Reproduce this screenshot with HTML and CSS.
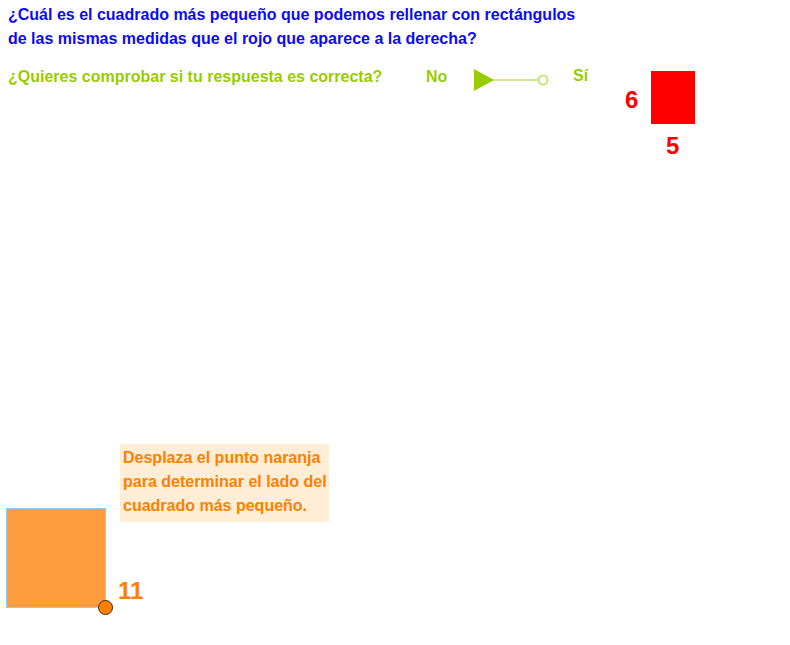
FILE: index.html
```html
<!DOCTYPE html>
<html lang="es">
<head>
<meta charset="utf-8">
<title>Cuadrado más pequeño</title>
<link rel="stylesheet" href="styles.css">
</head>
<body>
<div class="canvas">
  <div class="question">
    <p>¿Cuál es el cuadrado más pequeño que podemos rellenar con rectángulos</p>
    <p>de las mismas medidas que el rojo que aparece a la derecha?</p>
  </div>
  <div class="check-row">
    <span class="check-label">¿Quieres comprobar si tu respuesta es correcta?</span>
    <span class="opt-no">No</span>
    <svg class="slider" width="80" height="24" viewBox="0 0 80 24">
      <line x1="18" y1="11" x2="69" y2="11" stroke="#cdea8c" stroke-width="2"/>
      <polygon points="0,0 20,11 0,22" fill="#99cc00"/>
      <circle cx="69" cy="11" r="4.5" fill="#fff" stroke="#c4e67a" stroke-width="2.2"/>
    </svg>
    <span class="opt-si">Sí</span>
  </div>
  <div class="red-figure">
    <span class="num red-h">6</span>
    <div class="red-rect"></div>
    <span class="num red-w">5</span>
  </div>
  <div class="note">
    <p>Desplaza el punto naranja</p>
    <p>para determinar el lado del</p>
    <p>cuadrado más pequeño.</p>
  </div>
  <div class="orange-square"></div>
  <div class="orange-point"></div>
  <span class="num side-label">11</span>
</div>
</body>
</html>
```
FILE: styles.css
```css
html, body {
  margin: 0;
  padding: 0;
  background: #ffffff;
}
.canvas {
  position: relative;
  width: 790px;
  height: 645px;
  overflow: hidden;
  font-family: "Liberation Sans", Arial, sans-serif;
  font-weight: bold;
}
.canvas p {
  margin: 0;
}
.question {
  position: absolute;
  left: 8px;
  top: 3px;
  color: #0c0cf0;
  font-size: 16px;
  line-height: 24px;
}
.check-row {
  position: absolute;
  left: 8px;
  top: 67px;
  color: #99cc00;
  font-size: 16px;
  line-height: 20px;
}
.check-row > * {
  position: absolute;
  top: 0;
}
.check-label {
  left: 0;
  white-space: nowrap;
}
.opt-no {
  left: 418px;
}
.slider {
  left: 466px;
  top: 2px !important;
}
.opt-si {
  left: 565px;
  top: -1px !important;
}
.red-figure {
  position: absolute;
  left: 624px;
  top: 71px;
  width: 80px;
  height: 95px;
}
.num {
  position: absolute;
  font-size: 24px;
  line-height: 24px;
}
.red-h {
  left: 1px;
  top: 17px;
  color: #ff0000;
}
.red-rect {
  position: absolute;
  left: 27px;
  top: 0;
  width: 44px;
  height: 53px;
  background: #ff0000;
}
.red-w {
  left: 42px;
  top: 63px;
  color: #ff0000;
}
.note {
  position: absolute;
  left: 120px;
  top: 444px;
  width: 206px;
  height: 76px;
  padding: 2px 0 0 3px;
  background: #ffedd5;
  color: #ff7f00;
  font-size: 16px;
  line-height: 24px;
  box-sizing: content-box;
}
.orange-square {
  position: absolute;
  left: 6px;
  top: 508px;
  width: 98px;
  height: 98px;
  background: #ff9d3f;
  border: 1px solid #99ccee;
}
.orange-point {
  position: absolute;
  left: 98px;
  top: 600px;
  width: 15px;
  height: 15px;
  border-radius: 50%;
  background: #ff8000;
  border: 1px solid #3a2a1a;
  box-sizing: border-box;
}
.side-label {
  left: 118px;
  top: 579px;
  font-size: 24px;
  color: #ff7f00;
}
```
